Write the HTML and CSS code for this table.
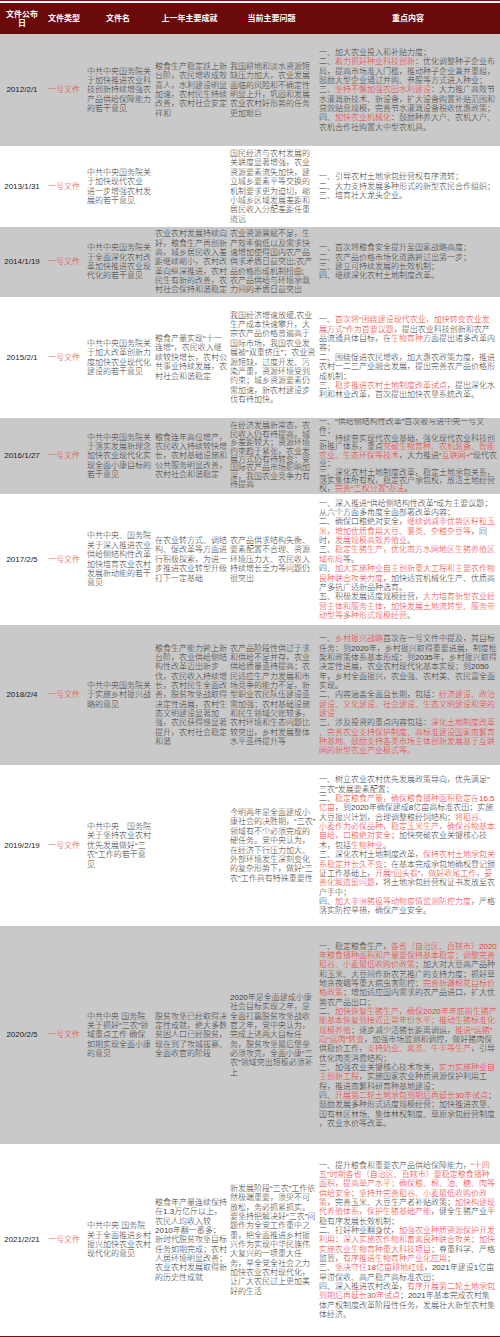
FILE: index.html
```html
<!DOCTYPE html>
<html lang="zh-CN">
<head>
<meta charset="utf-8">
<title>中央一号文件</title>
<link rel="stylesheet" href="styles.css">
</head>
<body>
<div class="sheet">
<table class="tbl">
<colgroup>
<col class="c1"><col class="c2"><col class="c3"><col class="c4"><col class="c5"><col class="c6">
</colgroup>
<thead>
<tr class="head">
<th class="hc">文件公布<br>日</th><th class="hc">文件类型</th><th class="hc">文件名</th><th class="hc">上一年主要成就</th><th class="hc">当前主要问题</th><th class="hc">重点内容</th>
</tr>
</thead>
<tbody>
<tr class="row g h2012">
<td class="date">2012/2/1</td><td class="type">一号文件</td>
<td>中共中央国务院关<br>于加快推进农业科<br>技创新持续增强农<br>产品供给保障能力<br>的若干意见</td>
<td>粮食生产稳定跃上新<br>台阶，农民增收成效<br>喜人，水利建设明显<br>加速，农村民生持续<br>改善，农村社会安定<br>祥和</td>
<td>我国耕地和淡水资源短<br>缺压力加大，农业发展<br>面临的风险和不确定性<br>明显上升，巩固和发展<br>农业农村好形势的任务<br>更加艰巨</td>
<td>一、加大农业投入和补贴力度；<br>二、<span class="r">着力抓好种业科技创新</span>：优化调整种子企业布<br>局，提高市场准入门槛，推动种子企业兼并重组，<br>鼓励大型企业通过并购、参股等方式进入种业；<br>三、<span class="r">坚持不懈加强农田水利建设</span>：大力推广高效节<br>水灌溉新技术、新设备，扩大设备购置补贴范围和<br>贷款贴息规模，完善节水灌溉设备税收优惠政策；<br>四、<span class="r">加快农业机械化</span>：鼓励种养大户、农机大户、<br>农机合作社购置大中型农机具。</td>
</tr>
<tr class="row h2013">
<td class="date">2013/1/31</td><td class="type">一号文件</td>
<td>中共中央国务院关<br>于加快现代农业<br>进一步增强农村发<br>展的若干意见</td>
<td></td>
<td>国民经济与农村发展的<br>关联度显著增强，农业<br>资源要素流失加快，建<br>立城乡要素平等交换的<br>机制要求更为迫切，缩<br>小城乡区域发展差距和<br>居民收入分配差距任重<br>道远</td>
<td class="r">一、引导农村土地承包经营权有序流转；<br>二、大力支持发展多种形式的新型农民合作组织；<br>三、培育壮大龙头企业。</td>
</tr>
<tr class="row g h2014">
<td class="date">2014/1/19</td><td class="type">一号文件</td>
<td>中共中央国务院关<br>于全面深化农村改<br>革加快推进农业现<br>代化的若干意见</td>
<td>农业农村发展持续向<br>好，粮食生产再创新<br>高，城乡居民收入差<br>距继续缩小，农村改<br>革向纵深推进，农村<br>民生有新的改善，农<br>村社会保持和谐稳定</td>
<td>农业资源禀赋不足，生<br>产效率偏低以及需求快<br>速增加使得国内农产品<br>供求矛盾日益突出;农产<br>品价格形成机制扭曲;<br>农产品供给与环境承载<br>力间的矛盾日益突出</td>
<td>一、首次将粮食安全提升至国家战略高度；<br>二、农产品价格市场化道路跨过出第一步；<br>三、建立可持续发展的长效机制；<br>四、继续深化农村土地制度改革。</td>
</tr>
<tr class="row h2015">
<td class="date">2015/2/1</td><td class="type">一号文件</td>
<td>中共中央国务院关<br>于加大改革创新力<br>度加快农业现代化<br>建设的若干意见</td>
<td>粮食产量实现“十一<br>连增”，农民收入继<br>续较快增长，农村公<br>共事业持续发展，农<br>村社会和谐稳定</td>
<td>我国经济增速放缓,农业<br>生产成本快速攀升，大<br>宗农产品价格普遍高于<br>国际市场，我国农业发<br>展被“双重挤压”；农业资<br>源短缺，过度开发、污<br>染严重，资源环境受到<br>约束；城乡资源要素仍<br>需加速，新农村建设步<br>伐有待加快。</td>
<td>一、<span class="r">首次将“围绕建设现代农业，加快转变农业发<br>展方式”作为首要议题</span>，提出农业科技创新和农产<br>品流通具体目标，在<span class="r">生物育种</span>方面提出诸多改革内<br>容；<br>二、围绕促进农民增收，加大惠农政策力度，推进<br>农村一二三产业融合发展，提出完善农产品价格形<br>成机制；<br>三、<span class="r">稳步推进农村土地制度改革试点</span>，提出深化水<br>利和林业改革，首次提出加快农垦系统改革。</td>
</tr>
<tr class="row g h2016">
<td class="date">2016/1/27</td><td class="type">一号文件</td>
<td>中共中央国务院关<br>于落实发展新理念<br>加快农业现代化实<br>现全面小康目标的<br>若干意见</td>
<td>粮食连年高位增产，<br>农民收入持续较快增<br>长，农村基础设施和<br>公共服务明显改善，<br>农村社会和谐稳定</td>
<td class="tight">在经济发展新常态，农<br>民收入仍有待提高，城<br>乡差距较大；资源环境<br>约束趋于紧张，农业发<br>展方式仍有待转变；受<br>国际农产品市场影响加<br>深，我国农业竞争力有<br>待提高</td>
<td class="tight">一、“供给侧结构性改革”首次被写进中央一号文<br>件；<br>二、持续夯实现代农业基础，强化现代农业科技创<br>新推广体系，重点<span class="r">突破生物育种、农机装备、智能<br>农业、生态环保等技术</span>，大力推进“<span class="r">互联网+</span>”现代农<br>业；<br>三、深化农村土地制度改革，稳定土地承包关系，<br>落实集体所有权，稳定农户承包权，放活土地经营<br>权，<span class="r">完善“三权分置”办法</span>。</td>
</tr>
<tr class="row h2017">
<td class="date">2017/2/5</td><td class="type">一号文件</td>
<td>中共中央、国务院<br>关于深入推进农业<br>供给侧结构性改革<br>加快培育农业农村<br>发展新动能的若干<br>意见</td>
<td>在农业转方式、调结<br>构、促改革等方面进<br>行积极探索，为进一<br>步推进农业转型升级<br>打下一定基础</td>
<td>农产品供求结构失衡、<br>要素配置不合理、资源<br>环境压力大、农民收入<br>持续增长乏力等问题仍<br>很突出</td>
<td>一、深入推进“供给侧结构性改革”成为主要议题；<br>从六个方面多角度全面部署改革内容；<br>二、确保口粮绝对安全，<span class="r">继续调减非优势区籽粒玉<br>米，增加优质食用大豆、薯类、杂粮杂豆等</span>，同<br>时，<span class="r">发展规模高效养殖业</span>。<br>三、<span class="r">稳定生猪生产，优化南方水网地区生猪养殖区<br>域布局</span>等。<br>四、<span class="r">加大实施种业自主创新重大工程和主要农作物<br>良种联合攻关力度</span>，加快适宜机械化生产、优质高<br>产多抗广适新品种选育。<br>五、积极发展适度规模经营，<span class="r">大力培育新型农业经<br>营主体和服务主体，加快发展土地流转型、服务带<br>动型等多种形式规模经营</span>。</td>
</tr>
<tr class="row g h2018">
<td class="date">2018/2/4</td><td class="type">一号文件</td>
<td>中共中央国务院关<br>于实施乡村振兴战<br>略的意见</td>
<td>粮食生产能力跨上新<br>台阶，农业供给侧结<br>构性改革迈出新步<br>伐，农民收入持续增<br>长，农村民生全面改<br>善，脱贫攻坚战取得<br>决定性进展，农村生<br>态文明建设显著加<br>强，农民获得感显著<br>提升，农村社会稳定<br>和谐</td>
<td>农产品阶段性供过于求<br>和供给不足并存，农业<br>供给质量亟待提高；农<br>民适应生产力发展和市<br>场竞争的能力不足，新<br>型职业农民队伍建设亟<br>需加强；农村基础设施<br>和民生领域欠账较多，<br>农村环境和生态问题比<br>较突出，乡村发展整体<br>水平亟待提升等</td>
<td>一、<span class="r">乡村振兴战略</span>首次在一号文件中提及，其目标<br>任务：到2020年，乡村振兴取得重要进展，制度框<br>架和政策体系基本形成；到2035年，乡村振兴取得<br>决定性进展，农业农村现代化基本实现；到2050<br>年，乡村全面振兴，农业强、农村美、农民富全面<br>实现。<br>二、内容涵盖全面且长期，包括：<span class="r">经济建设、政治<br>建设、文化建设、社会建设、生态文明建设和党的<br>建设</span><br>三、涉及投资的重点内容包括：<span class="r">深化土地制度改革<br>、完善农业支持保护制度、高标准建设国家南繁育<br>种基地、鼓励支持各类市场主体创新发展基于互联<br>网的新型农业产业模式等。</span></td>
</tr>
<tr class="row h2019">
<td class="date">2019/2/19</td><td class="type">一号文件</td>
<td>中共中央　国务院<br>关于坚持农业农村<br>优先发展做好“三<br>农”工作的若干意<br>见</td>
<td></td>
<td>今明两年是全面建成小<br>康社会的决胜期，“三农”<br>领域有不少必须完成的<br>硬任务。党中央认为，<br>在经济下行压力加大、<br>外部环境发生深刻变化<br>的复杂形势下，做好“三<br>农”工作具有特殊重要性</td>
<td>一、树立农业农村优先发展政策导向，优先满足“<br>三农”发展要素配置；<br>二、<span class="r">稳定粮食产量，确保粮食播种面积稳定在16.5<br>亿亩</span>，到2020年确保建成8亿亩高标准农田；实施<br>大豆振兴计划，合理调整粮经饲结构；<span class="r">将稻谷、<br>小麦作为必保品种，稳定玉米生产，确保谷物基本<br>自给，口粮绝对安全</span>；加快突破农业关键核心技<br>术，包括<span class="r">生物种业</span>。<br>三、深化农村土地制度改革，<span class="r">保持农村土地承包关<br>系稳定并长久不变</span>；在基本完成承包地确权登记颁<br>证工作基础上，<span class="r">开展“回头看”，做好收尾工作，妥<br>善化解遗留问题</span>，将土地承包经营权证书发放至农<br>户手中；<br>四、<span class="r">加大非洲猪瘟等动物疫情监测防控力度</span>，严格<br>落实防控举措，确保产业安全。</td>
</tr>
<tr class="row g h2020">
<td class="date">2020/2/5</td><td class="type">一号文件</td>
<td>中共中央 国务院<br>关于抓好“三农”领<br>域重点工作 确保<br>如期实现全面小康<br>的意见</td>
<td>脱贫攻坚已经取得决<br>定性成就，绝大多数<br>贫困人口已经脱贫，<br>现在到了攻城拔寨、<br>全面收官的阶段</td>
<td>2020年是全面建成小康<br>社会目标实现之年，是<br>全面打赢脱贫攻坚战收<br>官之年，党中央认为，<br>完成上述两大目标任<br>务，脱贫攻坚最后堡垒<br>必须攻克，全面小康“三<br>农”领域突出短板必须补<br>上</td>
<td>一、稳定粮食生产，<span class="r">各省（自治区、直辖市）2020<br>年粮食播种面积和产量要保持基本稳定；调整完善<br>稻谷、小麦最低收购价政策</span>；加大对大豆高产品种<br>和玉米、大豆间作新农艺推广的支持力度；抓好草<br>地贪夜蛾等重大病虫害防控；<span class="r">完善新疆棉花目标价<br>格政策</span>；增加适应国内需求的农产品进口，扩大优<br>势农产品出口；<br>二、<span class="r">加快恢复生猪生产，确保2020年年底前生猪产<br>能基本恢复到接近正常年份水平；推动生猪标准化<br>规模养殖</span>；逐步减少活猪长距离调运，<span class="r">推进“运猪”<br>向“运肉”转变</span>，加强市场监测和调控，做好猪肉保<br>供稳价工作，<span class="r">支持奶业、禽类、牛羊等生产</span>，引导<br>优化肉类消费结构；<br>三、加强农业关键核心技术攻关，<span class="r">实力实施种业自<br>主创新工程</span>，实施国家农业种质资源保护利用工<br>程，推进南繁科研育种基地建设；<br>四、<span class="r">开展第二轮土地承包到期后再延长30年试点</span>；<br>鼓励发展多种形式适度规模经营；加快推进农垦、<br>国有林区林场、集体林权制度、草原承包经营制度<br>，农业水价等改革。</td>
</tr>
<tr class="row h2021">
<td class="date">2021/2/21</td><td class="type">一号文件</td>
<td>中共中央 国务院<br>关于全面推进乡村<br>振兴加快农业农村<br>现代化的意见</td>
<td>粮食年产量连续保持<br>在1.3万亿斤以上，<br>农民人均收入较<br>2010年翻一番多；<br>新时代脱贫攻坚目标<br>任务如期完成；农村<br>人居环境明显改善；<br>农业农村发展取得新<br>的历史性成就</td>
<td>新发展阶段“三农”工作依<br>然极端重要，须臾不可<br>放松，务必抓紧抓实。<br>要坚持把解决好“三农”问<br>题作为全党工作重中之<br>重，把全面推进乡村振<br>兴作为实现中华民族伟<br>大复兴的一项重大任<br>务，举全党全社会之力<br>加快农业农村现代化，<br>让广大农民过上更加美<br>好的生活</td>
<td>一、提升粮食和重要农产品供给保障能力，<span class="r">“十四<br>五”时期各省（自治区、直辖市）要稳定粮食播种<br>面积，提高单产水平；确保粮、棉、油、糖、肉等<br>供给安全；坚持并完善稻谷、小麦最低收购价政<br>策</span>，完善玉米、大豆生产者补贴政策；<span class="r">加快构建现<br>代养殖体系，保护生猪基础产能</span>，健全生猪产业平<br>稳有序发展长效机制；<br>二、打好种业翻身仗，<span class="r">加强农业种质资源保护开发<br>利用；深入实施农作物和畜禽良种联合攻关；加快<br>实施农业生物育种重大科技项目</span>；尊重科学、严格<br>监管，<span class="r">有序推进生物育种产业化应用</span>；<br>三、<span class="r">坚决守住18亿亩耕地红线</span>，2021年建设1亿亩<br>旱涝保收、高产稳产高标准农田；<br>四、深入推进农村改革，<span class="r">有序开展第二轮土地承包<br>到期后再延长30年试点</span>；2021年基本完成农村集<br>体产权制度改革阶段性任务，发展壮大新型农村集<br>体经济。</td>
</tr>
</tbody>
</table>
</div>
</body>
</html>
```

FILE: styles.css
```css
body {
  margin: 0;
  background: #ffffff;
  font-family: "Liberation Sans", "Noto Sans CJK SC", sans-serif;
}
.sheet {
  width: 500px;
  border-top: 1px solid #7a0d0d;
  border-bottom: 2px solid #7a0d0d;
  padding-top: 2px;
}
.tbl {
  width: 500px;
  border-collapse: collapse;
  table-layout: fixed;
}
.c1 { width: 44px; }
.c2 { width: 40px; }
.c3 { width: 68px; }
.c4 { width: 75px; }
.c5 { width: 89px; }
.c6 { width: 184px; }
.head .hc {
  background: #6b0a0a;
  color: #ffffff;
  font-weight: bold;
  font-size: 8px;
  line-height: 9px;
  height: 31px;
  padding: 0;
  text-align: center;
  vertical-align: middle;
}
.row td {
  font-size: 8px;
  font-weight: 300;
  line-height: 9.35px;
  color: #3c3c3c;
  vertical-align: middle;
  padding: 0 0 0 3px;
  white-space: nowrap;
  overflow: hidden;
}
.row td.tight { line-height: 8.4px; }
.row.g td { background: #c9c9c9; }
.row .date { text-align: center; padding: 0; color: #222222; font-weight: normal; }
.row .type { text-align: center; padding: 0; color: #f03a3a; }
.r { color: #f03a3a; }
.h2012 td { height: 112px; }
.h2013 td { height: 81px; }
.h2014 td { height: 70px; }
.h2015 td { height: 121px; }
.h2016 td { height: 76px; }
.h2017 td { height: 131px; }
.h2018 td { height: 140px; }
.h2019 td { height: 161px; }
.h2020 td { height: 218px; }
.h2021 td { height: 192px; }
```
